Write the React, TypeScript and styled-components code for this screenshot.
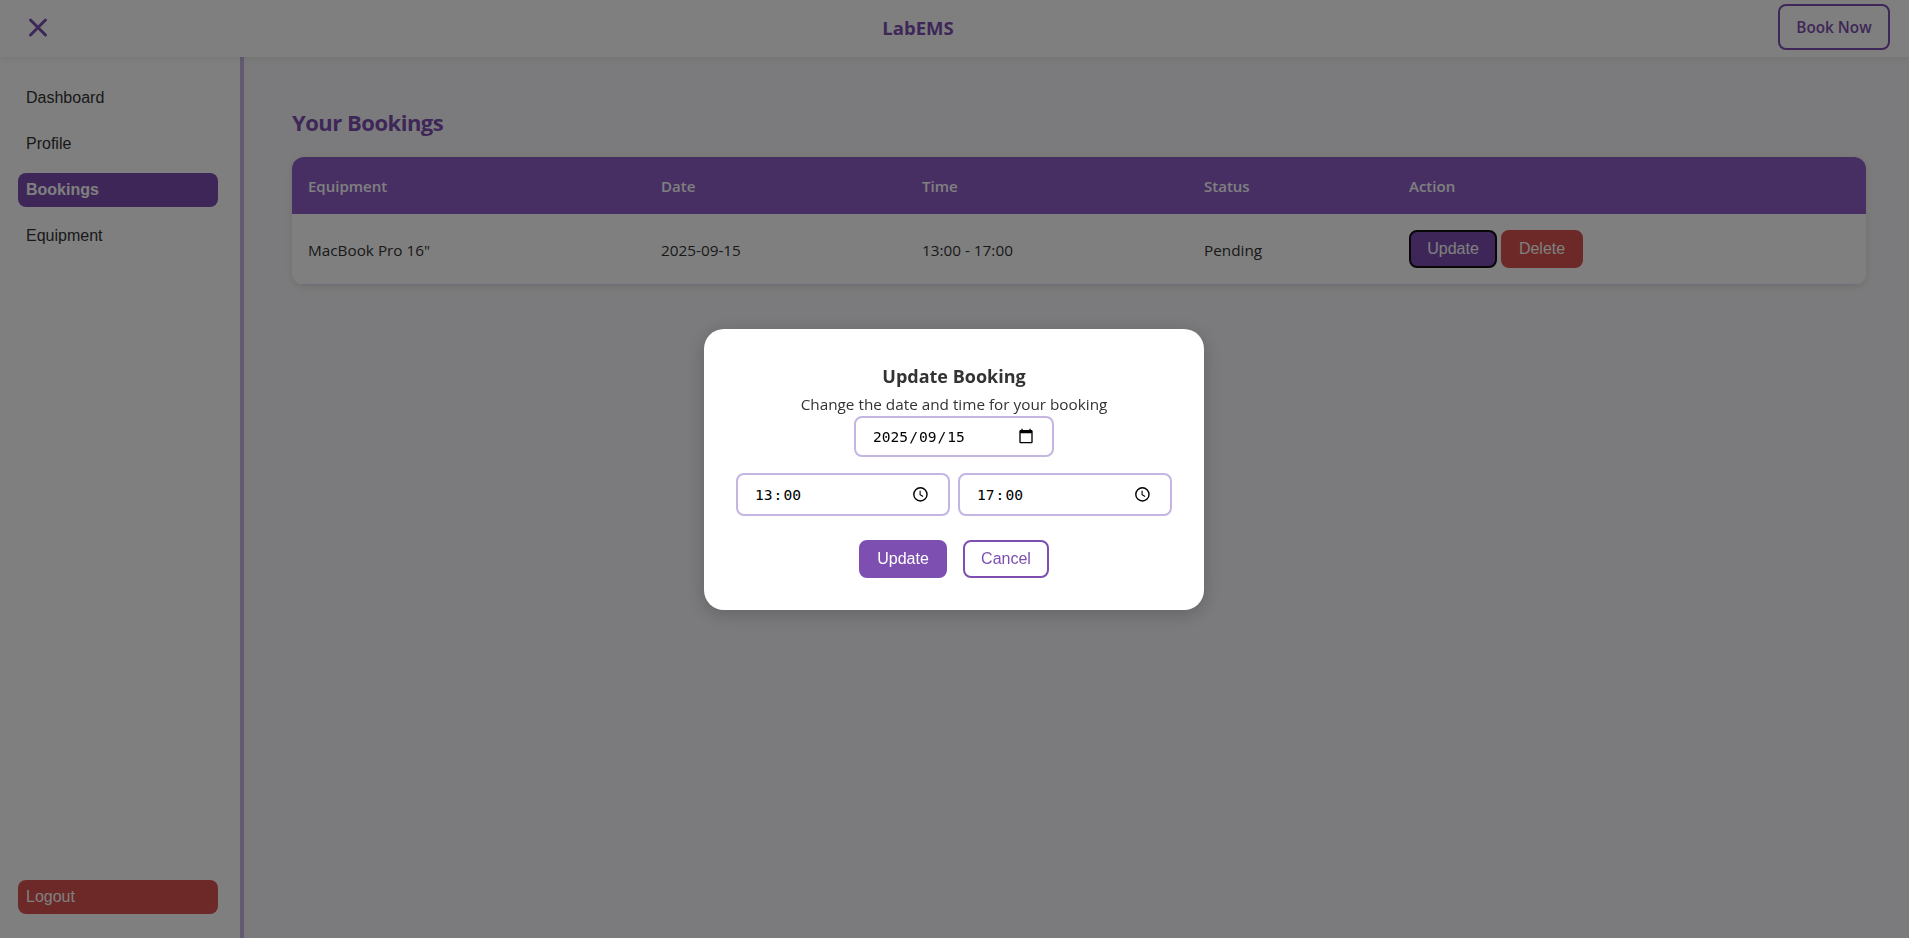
import React from "react";
import styled, { createGlobalStyle, css } from "styled-components";

const GlobalStyle = createGlobalStyle`
  *, *::before, *::after { box-sizing: border-box; }
  html, body, #root { height: 100%; }
  body {
    margin: 0;
    overflow: hidden;
    background: #f7f7fa;
    color: #333;
    font-family: "Segoe UI", "Open Sans", "Noto Sans", sans-serif;
    font-size: 15.5px;
    line-height: 25px;
  }
  h1, h2, p { margin: 0; }
`;

const Page = styled.div`
  display: flex;
  flex-direction: column;
  height: 100vh;
`;

const Header = styled.header`
  position: relative;
  z-index: 1;
  display: flex;
  align-items: center;
  justify-content: space-between;
  flex: none;
  height: 57px;
  padding: 0 19px 3px 26px;
  background: #fff;
  box-shadow: 0 2px 8px rgba(0, 0, 0, 0.08);
`;

const MenuButton = styled.button`
  display: flex;
  width: 32px;
  padding: 0;
  border: 0;
  background: none;
  color: #7c4fb0;
`;

const Brand = styled.div`
  color: #7c4fb0;
  font-size: 18.5px;
  font-weight: 700;
`;

const BookNow = styled.button`
  width: 112px;
  height: 46px;
  padding: 0;
  border: 2px solid #7c4fb0;
  border-radius: 8px;
  background: transparent;
  color: #7c4fb0;
  font-family: inherit;
  font-size: 15.3px;
  font-weight: 600;
`;

const Body = styled.div`
  display: flex;
  flex: 1;
  min-height: 0;
`;

const Sidebar = styled.nav`
  display: flex;
  flex-direction: column;
  gap: 12px;
  flex: none;
  width: 244px;
  padding: 24px 22px 24px 18px;
  border-right: 4px solid #c4b5e3;
  background: #fff;
`;

const NavItem = styled.button<{ $tone?: "active" | "danger" }>`
  height: 34px;
  padding: 0 8px;
  border: 0;
  border-radius: 8px;
  background: transparent;
  color: #333;
  font: 16px "Liberation Sans", Arial, sans-serif;
  text-align: left;
  ${({ $tone }) => $tone === "active" && css`
    background: #7c4fb0;
    color: #fff;
    font-weight: 700;
  `}
  ${({ $tone }) => $tone === "danger" && css`
    margin-top: auto;
    background: #d9534f;
    color: #fff;
  `}
`;

const Main = styled.main`
  flex: 1;
  padding: 48px 43px 48px 48px;
`;

const PageTitle = styled.h1`
  margin-bottom: 18px;
  color: #7c4fb0;
  font-size: 22px;
  line-height: 34px;
  letter-spacing: -0.5px;
`;

const TableCard = styled.div`
  overflow: hidden;
  border-radius: 12px;
  background: #fff;
  box-shadow: 0 2px 8px rgba(0, 0, 0, 0.1);
`;

const Table = styled.table`
  width: 100%;
  border-collapse: separate;
  border-spacing: 0;
  table-layout: fixed;
`;

const HeadCell = styled.th`
  height: 57px;
  padding: 2px 16px 0;
  background: #8e5fc8;
  color: #fff;
  font-size: 15px;
  font-weight: 600;
  text-align: left;
`;

const Cell = styled.td`
  height: 71px;
  padding: 3px 16px 0;
  border-bottom: 1px solid #e2d9f3;
  font-size: 15.3px;
`;

const Actions = styled.div`
  display: flex;
  gap: 4px;
  padding-bottom: 3px;
`;

const Button = styled.button<{ $kind: "solid" | "outline" | "danger"; $focused?: boolean }>`
  width: ${({ $kind }) => ({ solid: 88, outline: 86, danger: 82 })[$kind]}px;
  height: 38px;
  padding: 0;
  border: 2px solid ${({ $kind, $focused }) =>
    $focused ? "#101010" : $kind === "danger" ? "#d9534f" : "#7c4fb0"};
  border-radius: 8px;
  background: ${({ $kind }) => ({ solid: "#7c4fb0", outline: "#fff", danger: "#d9534f" })[$kind]};
  color: ${({ $kind }) => ($kind === "outline" ? "#7c4fb0" : "#fff")};
  font: 16px "Liberation Sans", Arial, sans-serif;
`;

const Overlay = styled.div`
  position: fixed;
  inset: 0;
  z-index: 10;
  display: flex;
  align-items: center;
  justify-content: center;
  padding-right: 1px;
  background: rgba(0, 0, 0, 0.5);
`;

const Modal = styled.div`
  display: flex;
  flex-direction: column;
  align-items: center;
  width: 500px;
  height: 281px;
  padding: 32px;
  border-radius: 20px;
  background: #fff;
  box-shadow: 0 4px 20px rgba(0, 0, 0, 0.2);
`;

const ModalTitle = styled.h2`
  font-size: 18px;
  line-height: 30px;
`;

const ModalText = styled.p`
  padding-top: 1px;
  font-size: 15.3px;
  line-height: 24px;
`;

const Field = styled.div<{ $width: number; $height: number; $inset: number }>`
  display: flex;
  align-items: center;
  justify-content: space-between;
  flex: none;
  width: ${({ $width }) => $width}px;
  height: ${({ $height }) => $height}px;
  padding: 0 ${({ $inset }) => $inset}px 0 16px;
  border: 2px solid #c4b5e3;
  border-radius: 8px;
  background: #fff;
  color: #000;
  font: 14.6px "DejaVu Sans Mono", monospace;
`;

const FieldParts = styled.span`
  display: flex;
`;

const Part = styled.span`
  padding: 0 1px;
`;

const TimeRow = styled.div`
  display: flex;
  gap: 8px;
  margin: 16px 0 24px;
`;

const ButtonRow = styled.div`
  display: flex;
  gap: 16px;
`;

const CloseIcon = () => (
  <svg width="24" height="24" viewBox="0 0 24 24" fill="none" stroke="currentColor" strokeWidth="3" strokeLinecap="round">
    <path d="M4.500 5 19.500 20M19.500 5 4.500 20" />
  </svg>
);

const CalendarIcon = () => (
  <svg width="16" height="16" viewBox="0 0 24 24" fill="currentColor">
    <path d="M20 3h-1V1h-2v2H7V1H5v2H4c-1.100 0-2 .9-2 2v16c0 1.100.9 2 2 2h16c1.100 0 2-.9 2-2V5c0-1.100-.9-2-2-2zm0 18H4V8h16v13z" />
  </svg>
);

const ClockIcon = () => (
  <svg width="16" height="16" viewBox="0 0 16 16" fill="none" stroke="currentColor">
    <circle cx="8.400" cy="8.400" r="6.600" strokeWidth="1.400" />
    <path d="M8.100 4.700v4l3 1.800" strokeWidth="1.100" />
  </svg>
);

const columns = [
  { label: "Equipment", width: 353 },
  { label: "Date", width: 261 },
  { label: "Time", width: 282 },
  { label: "Status", width: 205 },
  { label: "Action" },
];

const TimeField = ({ hour, minute }: { hour: string; minute: string }) => (
  <Field $width={214} $height={43} $inset={20}>
    <FieldParts><Part>{hour}</Part>:<Part>{minute}</Part></FieldParts>
    <ClockIcon />
  </Field>
);

export default function App() {
  return (
    <Page>
      <GlobalStyle />
      <Header>
        <MenuButton aria-label="Close menu"><CloseIcon /></MenuButton>
        <Brand>LabEMS</Brand>
        <BookNow>Book Now</BookNow>
      </Header>
      <Body>
        <Sidebar>
          <NavItem>Dashboard</NavItem>
          <NavItem>Profile</NavItem>
          <NavItem $tone="active">Bookings</NavItem>
          <NavItem>Equipment</NavItem>
          <NavItem $tone="danger">Logout</NavItem>
        </Sidebar>
        <Main>
          <PageTitle>Your Bookings</PageTitle>
          <TableCard>
            <Table>
              <colgroup>
                {columns.map((c) => <col key={c.label} width={c.width} />)}
              </colgroup>
              <thead>
                <tr>{columns.map((c) => <HeadCell key={c.label}>{c.label}</HeadCell>)}</tr>
              </thead>
              <tbody>
                <tr>
                  <Cell>MacBook Pro 16"</Cell>
                  <Cell>2025-09-15</Cell>
                  <Cell>13:00 - 17:00</Cell>
                  <Cell>Pending</Cell>
                  <Cell>
                    <Actions>
                      <Button $kind="solid" $focused>Update</Button>
                      <Button $kind="danger">Delete</Button>
                    </Actions>
                  </Cell>
                </tr>
              </tbody>
            </Table>
          </TableCard>
        </Main>
      </Body>
      <Overlay>
        <Modal role="dialog" aria-label="Update Booking">
          <ModalTitle>Update Booking</ModalTitle>
          <ModalText>Change the date and time for your booking</ModalText>
          <Field $width={200} $height={41} $inset={18}>
            <FieldParts><Part>2025</Part>/<Part>09</Part>/<Part>15</Part></FieldParts>
            <CalendarIcon />
          </Field>
          <TimeRow>
            <TimeField hour="13" minute="00" />
            <TimeField hour="17" minute="00" />
          </TimeRow>
          <ButtonRow>
            <Button $kind="solid">Update</Button>
            <Button $kind="outline">Cancel</Button>
          </ButtonRow>
        </Modal>
      </Overlay>
    </Page>
  );
}
